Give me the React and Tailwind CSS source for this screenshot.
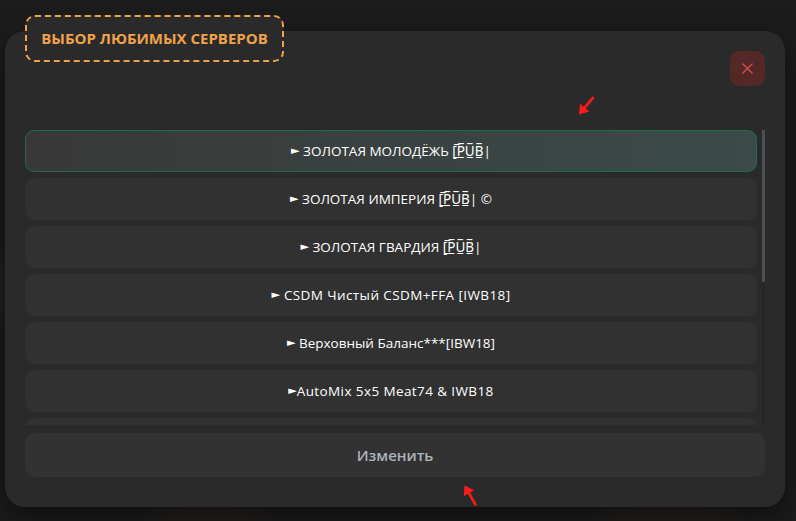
import React from "react";

const servers = [
    { name: " ЗОЛОТАЯ МОЛОДЁЖЬ [̲̅P̲̅U̲̅B̲̅|", active: true },
    { name: " ЗОЛОТАЯ ИМПЕРИЯ [̲̅P̲̅U̲̅B̲̅| ©" },
    { name: " ЗОЛОТАЯ ГВАРДИЯ [̲̅P̲̅U̲̅B̲̅|" },
    { name: " CSDM Чистый CSDM+FFA [IWB18]", latin: true },
    { name: " Верховный Баланс***[IBW18]" },
    { name: "AutoMix 5x5 Meat74 & IWB18", latin: true },
];

const RedArrow = ({ className, rotate }) => (
    <svg
        viewBox="0 0 20 24"
        className={className}
        style={{ transform: `rotate(${rotate}deg)` }}
    >
        <path d="M10 23 L10 7" stroke="#ff1a1a" strokeWidth="2.6" strokeLinecap="round" />
        <path d="M4 10 L10 1 L16 10 Z" fill="#ff1a1a" />
    </svg>
);

export default function App() {
    return (
        <div
            className="relative h-[521px] w-[796px] overflow-hidden bg-[#1c1c1c]"
            style={{ fontFamily: "'Open Sans', 'Noto Sans', sans-serif" }}
        >
            {/* faint blurred background at the bottom */}
            <div className="absolute bottom-0 left-[150px] h-[20px] w-[120px] rounded-full bg-[#3a2a20] opacity-40 blur-md" />
            <div className="absolute bottom-0 left-[600px] h-[20px] w-[140px] rounded-full bg-[#3a2a20] opacity-40 blur-md" />
            <div className="absolute left-0 top-[260px] h-[60px] w-[8px] rounded-full bg-[#333] opacity-60 blur-sm" />

            {/* Modal */}
            <div className="absolute left-[5px] top-[31px] flex h-[476px] w-[780px] flex-col rounded-[20px] bg-[#2a2a2a] px-5 pb-[30px] pt-5 shadow-[0_10px_30px_rgba(0,0,0,0.5)]">
                <div className="flex justify-end">
                    <button className="flex h-[35px] w-[35px] items-center justify-center rounded-[9px] bg-[#532826]">
                        <svg viewBox="0 0 12 12" className="h-[11px] w-[11px]">
                            <path d="M1 1 L11 11 M11 1 L1 11" stroke="#c9504c" strokeWidth="1.6" strokeLinecap="round" />
                        </svg>
                    </button>
                </div>

                <div className="mt-[44px] flex h-[295px] gap-[5px]">
                    <div className="flex flex-1 flex-col gap-[6px] overflow-hidden">
                        {servers.map((s, i) => (
                            <div
                                key={i}
                                className={
                                    s.active
                                        ? "flex h-[42px] shrink-0 items-center justify-center whitespace-pre rounded-[9px] border border-[#1e6b47] bg-gradient-to-r from-[#383838] to-[#3b4b49] text-[13.5px] text-white"
                                        : "flex h-[42px] shrink-0 items-center justify-center whitespace-pre rounded-[9px] bg-[#313131] text-[13.5px] text-white"
                                }
                            >
                                <span className="font-['DejaVu_Sans'] text-[11px]">►</span>
                                <span className={s.latin ? "tracking-[0.4px]" : ""}>{s.name}</span>
                            </div>
                        ))}
                        {/* next row, cut off by the scroll area */}
                        <div className="h-[42px] shrink-0 rounded-[9px] bg-[#313131]" />
                    </div>
                    <div className="flex w-[3px] flex-col bg-[#23252a]">
                        <div className="h-[152px] bg-[#4a4e57]" />
                    </div>
                </div>

                <button className="mt-[8px] flex h-[44px] w-full items-center justify-center rounded-[10px] bg-[#323232] text-[15px] font-semibold text-[#abb3bc]">
                    Изменить
                </button>
            </div>

            {/* Title badge */}
            <div className="absolute left-[25px] top-[15px] flex h-[47px] w-[259px] items-center justify-center rounded-[10px] border-2 border-dashed border-[#f0a24a] bg-[#2a2a2a]">
                <span className="text-[15px] font-bold text-[#f0a24a]">ВЫБОР ЛЮБИМЫХ СЕРВЕРОВ</span>
            </div>

            {/* annotation arrows */}
            <RedArrow className="absolute left-[576px] top-[94px] h-[24px] w-[20px]" rotate={-140} />
            <RedArrow className="absolute left-[460px] top-[483px] h-[24px] w-[20px]" rotate={-30} />
        </div>
    );
}
